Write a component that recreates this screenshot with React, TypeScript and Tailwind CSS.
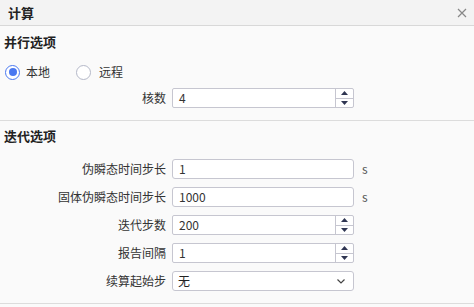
import React from "react";

const font = { fontFamily: '"Noto Sans CJK SC", "Liberation Sans", sans-serif' };

function Spinner() {
  return (
    <div className="flex flex-col w-[18px] h-full border-l border-[#c6c6d0]">
      <div className="flex-1 flex items-center justify-center border-b border-[#c6c6d0]">
        <svg width="7" height="4" viewBox="0 0 7 4"><path d="M0 4 L3.5 0 L7 4 Z" fill="#2f3552" /></svg>
      </div>
      <div className="flex-1 flex items-center justify-center">
        <svg width="7" height="4" viewBox="0 0 7 4"><path d="M0 0 L3.5 4 L7 0 Z" fill="#2f3552" /></svg>
      </div>
    </div>
  );
}

function Row({ label, children, unit }: { label: string; children: React.ReactNode; unit?: string }) {
  return (
    <div className="flex items-center h-[20px]">
      <div className="w-[166px] text-right text-[12px] text-[#333] leading-[20px]">{label}</div>
      <div className="ml-[6px] w-[182px] h-[20px]">{children}</div>
      {unit && <div className="ml-[8px] text-[12px] text-[#555] leading-[20px]">{unit}</div>}
    </div>
  );
}

function TextBox({ value }: { value: string }) {
  return (
    <div className="h-full w-full border border-[#c6c6d0] rounded-[3px] bg-white flex items-center px-[6px] text-[12px] text-[#333]">
      {value}
    </div>
  );
}

function SpinBox({ value }: { value: string }) {
  return (
    <div className="h-full w-full border border-[#c6c6d0] rounded-[2px] bg-white flex items-stretch text-[12px] text-[#333]">
      <div className="flex-1 flex items-center px-[6px]">{value}</div>
      <Spinner />
    </div>
  );
}

function SelectBox({ value }: { value: string }) {
  return (
    <div className="h-full w-full border border-[#c6c6d0] rounded-[3px] bg-white flex items-center justify-between pl-[5px] pr-[8px] text-[12px] text-[#222]">
      <span>{value}</span>
      <svg width="8" height="5" viewBox="0 0 8 5"><path d="M0.5 0.5 L4 4 L7.5 0.5" stroke="#444" strokeWidth="1.2" fill="none" /></svg>
    </div>
  );
}

export default function App() {
  return (
    <div className="w-[474px] h-[307px] bg-[#fafafa] overflow-hidden" style={font}>
      <div className="h-[26px] bg-[#f3f3f3] border-b border-[#d8d8d8] flex items-center justify-between pl-[8px] pr-[7px]">
        <span className="text-[13px] font-bold text-[#222] leading-[18px]">计算</span>
        <svg width="10" height="10" viewBox="0 0 10 10"><path d="M1 1 L9 9 M9 1 L1 9" stroke="#888" strokeWidth="1.2" /></svg>
      </div>
      <div className="pb-[12px]">
        <div className="mt-[7px] pl-[4px] h-[18px] leading-[18px] text-[13px] font-bold text-[#222]">并行选项</div>
        <div className="mt-[12px] h-[18px] flex items-center pl-[5px] text-[12px] text-[#333]">
          <div className="w-[15px] h-[15px] rounded-full border border-[#4a78f0] flex items-center justify-center bg-white">
            <div className="w-[8px] h-[8px] rounded-full bg-[#4a78f0]" />
          </div>
          <span className="ml-[6px]">本地</span>
          <div className="ml-[26px] w-[15px] h-[15px] rounded-full border border-[#b4b8c8] bg-white" />
          <span className="ml-[8px]">远程</span>
        </div>
        <div className="mt-[7px]">
          <Row label="核数"><SpinBox value="4" /></Row>
        </div>
      </div>
      <div className="border-t border-[#dcdcdc] border-b pb-[12px]">
        <div className="mt-[6px] pl-[4px] h-[18px] leading-[18px] text-[13px] font-bold text-[#222]">迭代选项</div>
        <div className="mt-[14px] flex flex-col gap-[8px]">
          <Row label="伪瞬态时间步长" unit="s"><TextBox value="1" /></Row>
          <Row label="固体伪瞬态时间步长" unit="s"><TextBox value="1000" /></Row>
          <Row label="迭代步数"><SpinBox value="200" /></Row>
          <Row label="报告间隔"><SpinBox value="1" /></Row>
          <Row label="续算起始步"><SelectBox value="无" /></Row>
        </div>
      </div>
    </div>
  );
}
